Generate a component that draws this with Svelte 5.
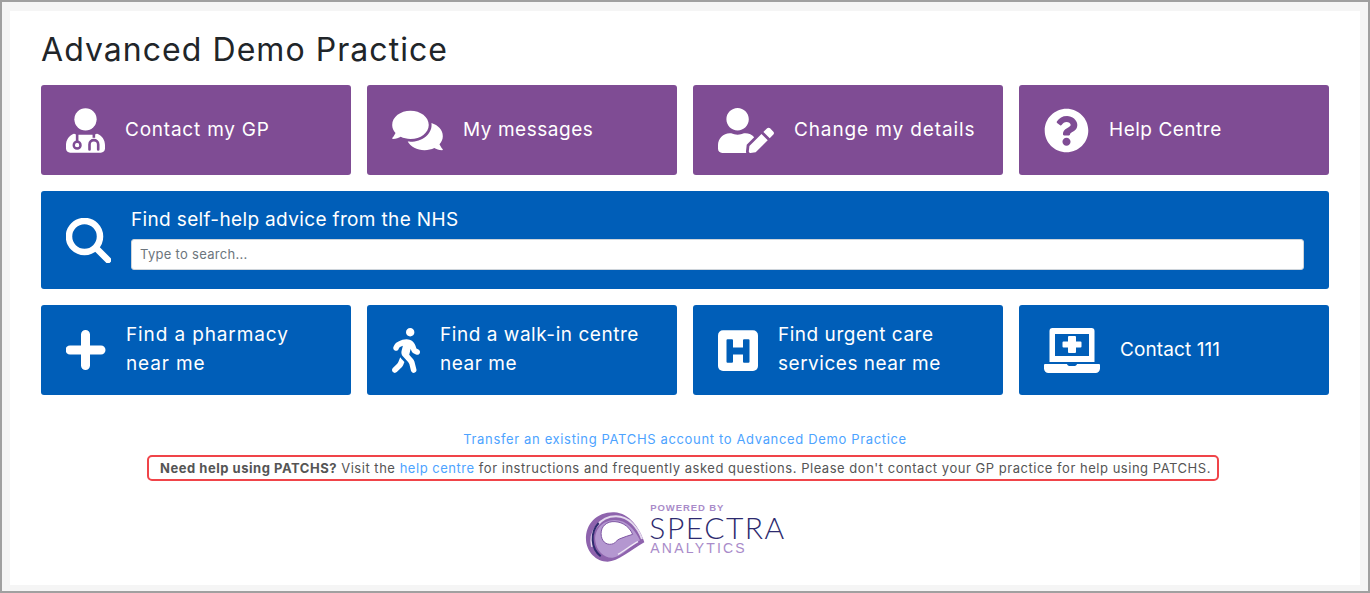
<script>
  const top = [
    { id: 'md', w: 39, vb: '0 0 448 512', label: ['Contact my GP'] },
    { id: 'msg', w: 51, vb: '0 0 576 512', label: ['My messages'] },
    { id: 'edit', w: 56, vb: '0 0 640 512', label: ['Change my details'] },
    { id: 'q', w: 45, vb: '0 0 512 512', label: ['Help Centre'] }
  ];
  const bottom = [
    { id: 'plus', w: 40, vb: '0 0 40 40', label: ['Find a pharmacy', 'near me'] },
    { id: 'walk', w: 28, vb: '0 0 320 512', label: ['Find a walk-in centre', 'near me'] },
    { id: 'h', w: 40, vb: '0 0 40 45', label: ['Find urgent care', 'services near me'] },
    { id: 'laptop', w: 56, vb: '0 0 56 45', label: ['Contact 111'] }
  ];
</script>

{#snippet icon(c)}
  <svg class="icon" width={c.w} height="45" viewBox={c.vb} aria-hidden="true">
    {#if c.id === 'md'}
      <circle cx="224" cy="128" r="128" fill="#fff" />
      <path fill="#fff" d="M90 292C36 312 0 362 0 422v42c0 26.500 21.500 48 48 48h352c26.500 0 48-21.500 48-48v-42c0-60-36-110-90-130-10 2-30 14-134 14S100 294 90 292z" />
      <g fill="none" stroke="#7f4c94" stroke-width="30">
        <path d="M128 286v110" />
        <circle cx="128" cy="424" r="38" />
        <path d="M320 280v60" />
        <path d="M270 474v-58c0-66 100-66 100 0v58" stroke-linecap="round" />
      </g>
      <circle cx="128" cy="424" r="22" fill="#fff" />
    {:else if c.id === 'msg'}
      <path fill="#fff" d="M416 192c0-88.400-93.100-160-208-160S0 103.600 0 192c0 34.300 14.100 65.900 38 92-13.400 30.200-35.500 54.200-35.800 54.500-2.200 2.300-2.800 5.700-1.500 8.700S4.800 352 8 352c36.600 0 66.900-12.300 88.700-25 32.200 15.700 70.300 25 111.300 25 114.900 0 208-71.600 208-160zm122 220c23.900-26 38-57.700 38-92 0-66.900-53.500-124.200-129.300-148.100.9 6.600 1.300 13.300 1.300 20.100 0 105.900-107.700 192-240 192-10.800 0-21.300-.8-31.700-1.900C207.800 439.600 281.800 480 368 480c41 0 79.100-9.200 111.300-25 21.800 12.700 52.100 25 88.700 25 3.200 0 6.100-1.900 7.300-4.800 1.300-2.900.7-6.300-1.500-8.700-.3-.3-22.400-24.200-35.800-54.500z" />
    {:else if c.id === 'edit'}
      <path fill="#fff" d="M224 256c70.700 0 128-57.300 128-128S294.700 0 224 0 96 57.300 96 128s57.300 128 128 128zm89.600 32h-16.700c-22.200 10.200-46.900 16-72.900 16s-50.600-5.800-72.900-16h-16.700C60.200 288 0 348.200 0 422.400V464c0 26.500 21.500 48 48 48h274.900c-2.400-6.800-3.400-14-2.600-21.300l6.800-60.900 1.200-11.100 7.900-7.900 77.300-77.300c-24.500-27.700-60-45.500-99.900-45.500zm45.300 145.300l-6.800 61c-1.100 10.200 7.500 18.800 17.600 17.600l60.900-6.800 137.900-137.900-71.700-71.700-137.900 137.800zM633 268.900L595.100 231c-9.300-9.300-24.500-9.300-33.800 0l-37.800 37.800-4.100 4.100 71.800 71.700 41.800-41.800c9.300-9.400 9.300-24.500 0-33.900z" />
    {:else if c.id === 'q'}
      <path fill="#fff" d="M504 256c0 136.997-111.043 248-248 248S8 392.997 8 256C8 119.083 119.043 8 256 8s248 111.083 248 248zM262.655 90c-54.497 0-89.255 22.957-116.549 63.758-3.536 5.286-2.353 12.415 2.715 16.258l34.699 26.310c5.205 3.947 12.621 3.008 16.665-2.122 17.864-22.658 30.113-35.797 57.303-35.797 20.429 0 45.698 13.148 45.698 32.958 0 14.976-12.363 22.667-32.534 33.976C247.128 238.528 216 254.941 216 296v4c0 6.627 5.373 12 12 12h56c6.627 0 12-5.373 12-12v-1.333c0-28.462 83.186-29.647 83.186-106.667 0-58.002-60.165-102-116.531-102zM256 338c-25.365 0-46 20.635-46 46 0 25.364 20.635 46 46 46s46-20.636 46-46c0-25.365-20.635-46-46-46z" />
    {:else if c.id === 'plus'}
      <path d="M19.500 4v31M4 19.500h31" stroke="#fff" stroke-width="9" stroke-linecap="round" fill="none" />
    {:else if c.id === 'walk'}
      <path fill="#fff" d="M208 96c26.500 0 48-21.500 48-48S234.500 0 208 0s-48 21.500-48 48 21.500 48 48 48zm94.500 149.100l-23.300-11.800-9.700-29.400c-14.700-44.600-55.700-75.800-102.200-75.900-36-.1-55.900 10.100-93.300 25.200-21.600 8.700-39.300 25.200-49.700 46.200L17.600 213c-7.800 15.800-1.500 35 14.200 42.900 15.600 7.900 34.600 1.500 42.500-14.300L81 228c3.500-7 9.300-12.500 16.500-15.400l26.800-10.800-15.200 60.700c-5.200 20.800.4 42.900 14.900 58.800l59.900 65.400c7.200 7.900 12.300 17.400 14.900 27.700l18.300 73.300c4.300 17.100 21.700 27.600 38.800 23.300 17.100-4.300 27.600-21.700 23.300-38.800l-22.200-89c-2.600-10.300-7.700-19.900-14.900-27.700l-45.500-49.700 17.200-68.700 5.500 16.500c5.300 16.100 16.700 29.400 31.700 37l23.300 11.800c15.600 7.900 34.600 1.500 42.500-14.300 7.700-15.700 1.400-35.100-14.300-43zM73.600 385.800c-3.200 8.100-8 15.400-14.200 21.500l-50 50.100c-12.500 12.500-12.500 32.800 0 45.300s32.700 12.500 45.200 0l59.400-59.400c6.100-6.100 10.900-13.400 14.200-21.500l13.500-33.800c-55.300-60.300-38.700-41.800-47.400-53.700l-20.700 51.500z" />
    {:else if c.id === 'h'}
      <rect y="2.300" width="40" height="40.700" rx="5" fill="#fff" />
      <path fill="#005eb8" d="M9.500 11.300h4.500a1 1 0 0 1 1 1V19.500h10V12.300a1 1 0 0 1 1-1h4.500a1 1 0 0 1 1 1v21.400a1 1 0 0 1-1 1H26a1 1 0 0 1-1-1V26.500H15v7.200a1 1 0 0 1-1 1H9.500a1 1 0 0 1-1-1V12.300a1 1 0 0 1 1-1z" />
    {:else if c.id === 'laptop'}
      <path fill="#fff" fill-rule="evenodd" d="M8.500 0h39a3 3 0 0 1 3 3v31h-45V3a3 3 0 0 1 3-3zM11 6v22h34V6z" />
      <path fill="#fff" d="M25 8h6a1 1 0 0 1 1 1v4.500h4.500a1 1 0 0 1 1 1v4a1 1 0 0 1-1 1H32V24a1 1 0 0 1-1 1h-6a1 1 0 0 1-1-1v-4.500h-4.500a1 1 0 0 1-1-1v-4a1 1 0 0 1 1-1H24V9a1 1 0 0 1 1-1z" />
      <path fill="#fff" d="M1 36h22c.5 1.500 1.500 2 3 2h4c1.500 0 2.500-.5 3-2h22a1 1 0 0 1 1 1v3.500c0 2.500-2 4.500-4.500 4.500h-47C2 45 0 43 0 40.500V37a1 1 0 0 1 1-1z" />
    {/if}
  </svg>
{/snippet}

{#snippet card(c)}
  <a class="card {c.id}" class:purple={top.includes(c)} href="#top">
    {@render icon(c)}
    <span class="label">
      {#each c.label as line}<span class="line">{line}</span>{/each}
    </span>
  </a>
{/snippet}

<div class="frame">
  <main class="panel">
    <h1>Advanced Demo Practice</h1>
    <div class="grid">
      {#each top as c}{@render card(c)}{/each}
      <div class="card search">
        <svg class="icon" width="45" height="45" viewBox="0 0 45 45" aria-hidden="true">
          <circle cx="18.500" cy="18.500" r="15.500" fill="none" stroke="#fff" stroke-width="6.500" />
          <path d="M30 30l12 12" stroke="#fff" stroke-width="6.500" stroke-linecap="round" />
        </svg>
        <div class="searchbody">
          <label class="searchlabel" for="q">Find self-help advice from the NHS</label>
          <input id="q" type="text" placeholder="Type to search..." />
        </div>
      </div>
      {#each bottom as c}{@render card(c)}{/each}
    </div>

    <footer class="foot">
      <a class="transfer" href="#top">Transfer an existing PATCHS account to Advanced Demo Practice</a>
      <p class="notice"><strong>Need help using PATCHS?</strong> Visit the <a href="#top">help centre</a> for instructions and frequently asked questions. Please don't contact your GP practice for help using PATCHS.</p>
      <div class="logo">
        <svg class="swirl" width="75" height="60" viewBox="0 0 225 180" aria-hidden="true">
          <path fill="#8e63ad" d="M205 112C192 70 160 24 115 22 65 20 28 55 30 105c2 35 30 65 65 65 30 0 70-35 110-58z" />
          <path fill="none" stroke="#e4d9ee" stroke-width="6" d="M48 125C38 80 72 34 120 34c40 0 66 36 78 68" />
          <path fill="none" stroke="#2d2a6e" stroke-width="6" d="M74 154C44 130 42 82 68 54" />
          <path fill="#b497d0" d="M192 106C176 72 150 44 115 45 78 46 54 76 58 108c3 30 28 52 52 50 28-3 52-34 82-52z" />
          <path fill="#fff" stroke="#7f57a3" stroke-width="3" d="M170 88C158 60 132 48 108 50 84 53 72 72 76 94c4 20 20 28 36 22 10-4 8-10 18-14 14-6 28-10 40-14z" />
          <path fill="none" stroke="#f1eaf6" stroke-width="4" d="M186 110c-20 10-38 26-60 38" />
        </svg>
        <div class="wordmark">
          <span class="powered">POWERED BY</span>
          <span class="spectra">SPECTRA</span>
          <span class="analytics">ANALYTICS</span>
        </div>
      </div>
    </footer>
  </main>
</div>

<style>
  :global(body) {
    margin: 0;
    font-family: Inter, "Open Sans", sans-serif;
  }
  .frame {
    box-sizing: border-box;
    height: 593px;
    border: 2px solid #a0a0a0;
    background: #f5f5f5;
    padding: 9px 8px 6px;
  }
  .panel {
    box-sizing: border-box;
    height: 574px;
    background: #fff;
    padding: 0 31px;
    overflow: hidden;
  }
  h1 {
    margin: 0;
    height: 74px;
    line-height: 78px;
    font-size: 32px;
    font-weight: 400;
    color: #212529;
    letter-spacing: 1.05px;
  }
  .grid {
    display: grid;
    grid-template-columns: repeat(4, 310px);
    grid-template-rows: 90px 98px 90px;
    gap: 16px;
  }
  .card {
    box-sizing: border-box;
    display: flex;
    align-items: center;
    gap: 20px;
    padding: 0 25px;
    border-radius: 3px;
    background: #005eb8;
    color: #fff;
    text-decoration: none;
    font-size: 19px;
    line-height: 29px;
    letter-spacing: 0.35px;
    font-weight: 400;
  }
  .card.purple {
    background: #7f4c94;
  }
  .card.md { letter-spacing: 0.78px; }
  .card.msg { letter-spacing: 0.54px; }
  .card.edit { letter-spacing: 0.88px; }
  .card.q { letter-spacing: 0.52px; }
  .card.plus { letter-spacing: 0.88px; }
  .card.walk { letter-spacing: 0.54px; }
  .card.h { letter-spacing: 0.52px; }
  .card.laptop { letter-spacing: 0.1px; }
  .label {
    margin-top: -2px;
  }
  .icon {
    flex: none;
    display: block;
  }
  .line {
    display: block;
  }
  .search {
    grid-column: 1 / -1;
  }
  .searchbody {
    flex: 1;
    display: flex;
    flex-direction: column;
    gap: 5px;
    margin-top: -2px;
  }
  .searchlabel {
    line-height: 27px;
    margin-top: -3px;
    margin-bottom: 1px;
  }
  input {
    box-sizing: border-box;
    width: 100%;
    height: 31px;
    border: 1px solid #ced4da;
    border-radius: 3px;
    padding: 0 8px;
    font: 400 13px Inter, "Open Sans", sans-serif;
    letter-spacing: 0.3px;
    background: #fff;
  }
  input::placeholder {
    color: #6c757d;
    opacity: 1;
  }
  .foot {
    display: flex;
    flex-direction: column;
    align-items: center;
    margin-top: 34px;
    font-size: 13px;
    color: #555;
  }
  .foot a {
    color: #4da3ff;
    text-decoration: none;
  }
  .transfer {
    line-height: 20px;
    letter-spacing: 0.65px;
  }
  .notice {
    box-sizing: border-box;
    margin: 6px 0 0 -5px;
    width: 1072px;
    height: 26px;
    line-height: 22px;
    padding-left: 6px;
    border: 2px solid #f04449;
    border-radius: 5px;
    text-align: center;
    white-space: nowrap;
    letter-spacing: 0.525px;
  }
  .logo {
    display: flex;
    align-items: flex-start;
    margin: 21px 0 0 -8px;
  }
  .swirl {
    display: block;
    margin-top: 3px;
  }
  .wordmark {
    display: flex;
    flex-direction: column;
    margin-left: -2px;
    font-family: "Liberation Sans", sans-serif;
  }
  .powered {
    font-size: 9.500px;
    line-height: 11px;
    font-weight: 700;
    letter-spacing: 0.9px;
    color: #a98bc9;
    margin-left: 1px;
  }
  .spectra {
    font-size: 30px;
    line-height: 28px;
    color: #2d2a6e;
    letter-spacing: 1.5px;
    font-family: Lato, sans-serif;
    font-weight: 300;
  }
  .analytics {
    font-size: 14px;
    line-height: 14px;
    letter-spacing: 2.2px;
    color: #a98bc9;
    margin-left: 1px;
  }
</style>
